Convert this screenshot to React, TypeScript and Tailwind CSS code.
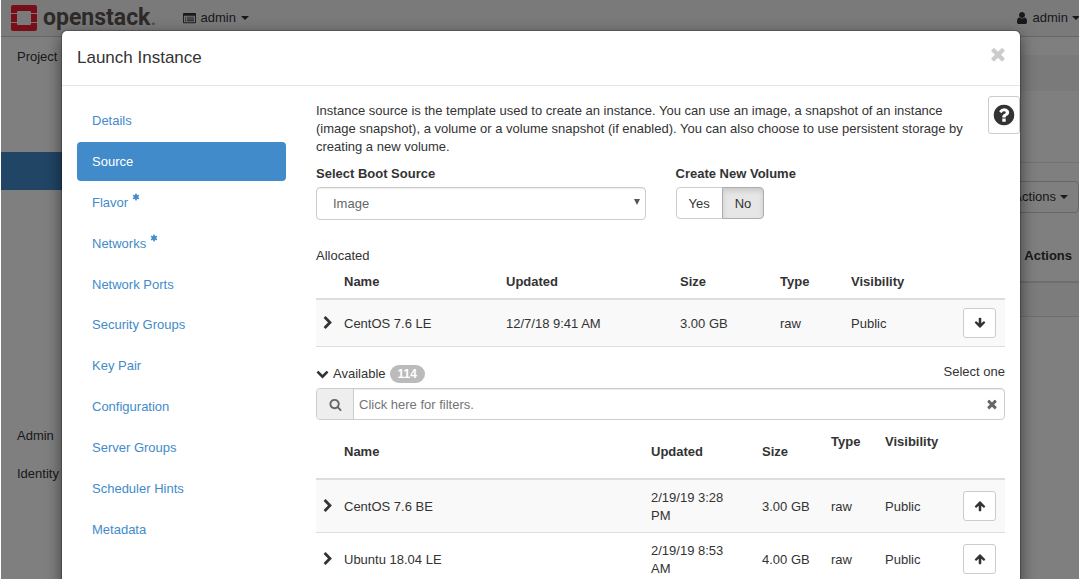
import React, { useState } from "react";

interface IImage {
    name: string;
    updated: string;
    size: string;
    type: string;
    visibility: string;
}

interface IIconProps {
    d: string;
    className?: string;
}

const icons = {
    times: "M1490 1322q0 40-28 68l-136 136q-28 28-68 28t-68-28l-294-294-294 294q-28 28-68 28t-68-28l-136-136q-28-28-28-68t28-68l294-294-294-294q-28-28-28-68t28-68l136-136q28-28 68-28t68 28l294 294 294-294q28-28 68-28t68 28l136 136q28 28 28 68t-28 68l-294 294 294 294q28 28 28 68z",
    user: "M1536 1399q0 109-62.5 187t-150.5 78h-854q-88 0-150.5-78t-62.5-187q0-85 8.5-160.5t31.5-152 58.5-131 94-89 134.5-34.5q131 128 313 128t313-128q76 0 134.5 34.5t94 89 58.5 131 31.5 152 8.5 160.5zm-256-887q0 159-112.5 271.5t-271.5 112.5-271.5-112.5-112.5-271.5 112.5-271.5 271.5-112.5 271.5 112.5 112.5 271.5z",
    question: "M1024 1376v-192q0-14-9-23t-23-9h-192q-14 0-23 9t-9 23v192q0 14 9 23t23 9h192q14 0 23-9t9-23zm256-672q0-88-55.5-163t-138.5-116-170-41q-243 0-371 213-15 24 8 42l132 100q7 6 19 6 16 0 25-12 53-68 86-92 34-24 86-24 48 0 85.5 26t37.5 59q0 38-20 61t-68 45q-63 28-115.5 86.5t-52.5 125.5v36q0 14 9 23t23 9h192q14 0 23-9t9-23q0-19 21.5-49.5t54.5-49.5q32-18 49-28.5t46-35 44.5-48 28-60.5 12.5-81zm384 192q0 209-103 385.5t-279.5 279.5-385.5 103-385.5-103-279.5-279.5-103-385.5 103-385.5 279.5-279.5 385.5-103 385.5 103 279.5 279.5 103 385.5z",
    search: "M1216 832q0-185-131.5-316.5t-316.5-131.5-316.5 131.5-131.5 316.5 131.5 316.5 316.5 131.5 316.5-131.5 131.5-316.5zm512 832q0 52-38 90t-90 38q-54 0-90-38l-343-342q-179 124-399 124-143 0-273.5-55.5t-225-150-150-225-55.5-273.5 55.5-273.5 150-225 225-150 273.5-55.5 273.5 55.5 225 150 150 225 55.5 273.5q0 220-124 399l343 343q37 37 37 90z",
    chevronRight: "M1363 877l-742 742q-19 19-45 19t-45-19l-166-166q-19-19-19-45t19-45l531-531-531-531q-19-19-19-45t19-45l166-166q19-19 45-19t45 19l742 742q19 19 19 45t-19 45z",
    chevronDown: "M1683 808l-742 741q-19 19-45 19t-45-19l-742-741q-19-19-19-45.5t19-45.5l166-165q19-19 45-19t45 19l531 531 531-531q19-19 45-19t45 19l166 165q19 19 19 45.5t-19 45.5z",
    arrowUp: "M1675 971q0 51-37 90l-75 75q-38 38-91 38-54 0-90-38l-294-293v704q0 52-37.5 84.5t-90.5 32.5h-128q-53 0-90.5-32.5t-37.5-84.5v-704l-294 293q-36 38-90 38t-90-38l-75-75q-38-38-38-90 0-53 38-91l651-651q35-37 90-37 54 0 91 37l651 651q37 39 37 91z",
    asterisk: "M1546 1050q46 26 59.5 77.5t-12.5 97.5l-64 110q-26 46-77.5 59.5t-97.5-12.5l-266-153v307q0 52-38 90t-90 38h-128q-52 0-90-38t-38-90v-307l-266 153q-46 26-97.5 12.5t-77.5-59.5l-64-110q-26-46-12.5-97.5t59.5-77.5l266-154-266-154q-46-26-59.5-77.5t12.5-97.5l64-110q26-46 77.5-59.5t97.5 12.5l266 153v-307q0-52 38-90t90-38h128q52 0 90 38t38 90v307l266-153q46-26 97.5-12.5t77.5 59.5l64 110q26 46 12.5 97.5t-59.5 77.5l-266 154z",
    list: "M128 128h1536q128 0 128 128v1152q0 128-128 128h-1536q-128 0-128-128v-1152q0-128 128-128zm0 384v896h1536v-896zm128 128h160v128h-160zm256 0h1024v128h-1024zm-256 256h160v128h-160zm256 0h1024v128h-1024zm-256 256h160v128h-160zm256 0h1024v128h-1024z",
}

const steps = [
    { label: "Details" },
    { label: "Source" },
    { label: "Flavor", required: true },
    { label: "Networks", required: true },
    { label: "Network Ports" },
    { label: "Security Groups" },
    { label: "Key Pair" },
    { label: "Configuration" },
    { label: "Server Groups" },
    { label: "Scheduler Hints" },
    { label: "Metadata" },
]

const allocated: IImage[] = [
    { name: "CentOS 7.6 LE", updated: "12/7/18 9:41 AM", size: "3.00 GB", type: "raw", visibility: "Public" },
]

const available: IImage[] = [
    { name: "CentOS 7.6 BE", updated: "2/19/19 3:28 PM", size: "3.00 GB", type: "raw", visibility: "Public" },
    { name: "Ubuntu 18.04 LE", updated: "2/19/19 8:53 AM", size: "4.00 GB", type: "raw", visibility: "Public" },
]

const Icon = ({ d, className }: IIconProps) => (
    <svg viewBox="0 0 1792 1792" fill="currentColor" fillRule="evenodd" aria-hidden="true" className={`shrink-0 ${className}`}>
        <path d={d} />
    </svg>
)

const Caret = () => (
    <svg viewBox="0 0 8 4" fill="currentColor" aria-hidden="true" className="h-1 w-2 shrink-0">
        <path d="M0 0h8l-4 4z" />
    </svg>
)

const Logo = () => (
    <a href="#" className="flex items-center gap-1.5 text-[#5a5552]">
        <svg viewBox="0 0 26 26" fill="#ee1c35" aria-hidden="true" className="h-[26px] w-[26px]">
            <path d="M2 0h22a2 2 0 0 1 2 2v6h-6v-1a1 1 0 0 0-1-1h-12a1 1 0 0 0-1 1v1h-6v-6a2 2 0 0 1 2-2z" />
            <path d="M0 9h6v8h-6zM20 9h6v8h-6z" />
            <path d="M2 26h22a2 2 0 0 0 2-2v-6h-6v1a1 1 0 0 1-1 1h-12a1 1 0 0 1-1-1v-1h-6v6a2 2 0 0 0 2 2z" />
        </svg>
        <span className="font-['Roboto',sans-serif] text-[23px] leading-6 font-bold">openstack<span className="font-normal opacity-60">.</span></span>
    </a>
)

const Background = () => (
    <div className="min-h-screen border-l border-white bg-white">
        <header className="flex h-[37px] items-center border-b border-[#ccc] bg-[#f5f5f5] pl-2.5">
            <Logo />
            <button className="ml-[26px] flex items-center gap-[5px]">
                <Icon d={icons.list} className="h-[13px] w-[13px]" />
                admin
                <Caret />
            </button>
            <button className="-mr-px ml-auto flex items-center gap-1">
                <Icon d={icons.user} className="h-[14px] w-[14px]" />
                admin
                <Caret />
            </button>
        </header>
        <div className="flex">
            <nav className="w-[220px] shrink-0 leading-9">
                <a href="#" className="block px-4 pt-0.5">Project</a>
                <div className="pt-[77px] pb-[226px]">
                    <div className="h-[38px] bg-[#428bca]" />
                </div>
                <a href="#" className="block px-4 pt-0.5">Admin</a>
                <a href="#" className="block px-4 pt-0.5">Identity</a>
            </nav>
            <main className="min-w-0 grow pt-[18px]">
                <div className="h-9 bg-[#f5f5f5]" />
                <div className="h-[72px] border-b border-[#e5e5e5]" />
                <div className="flex justify-end pt-[18px]">
                    <button className="flex h-8 items-center gap-1 rounded border border-[#ccc] px-2.5">More Actions <Caret /></button>
                </div>
                <table className="mt-[25px] w-full">
                    <thead>
                        <tr className="border-b-2 border-[#ddd]">
                            <th className="h-[44px] w-full" />
                            <th className="pr-[7px] pb-2 pl-2 font-bold">Actions</th>
                        </tr>
                    </thead>
                    <tbody>
                        <tr className="border-b border-[#ddd] bg-[#f9f9f9]">
                            <td className="h-[34px]" colSpan={2} />
                        </tr>
                    </tbody>
                </table>
            </main>
        </div>
    </div>
)

const ImageRow = ({ image, allocated }: { image: IImage; allocated?: boolean }) => (
    <tr className="border-b border-[#ddd] odd:bg-[#f9f9f9]">
        <td className="pl-[5px]">
            <button aria-label="Show details" className="block">
                <Icon d={icons.chevronRight} className="h-[14px] w-[14px]" />
            </button>
        </td>
        <td className="px-2 pt-[9px] pb-[7px]">{image.name}</td>
        <td className="pt-[9px] pr-4 pb-[7px] pl-2">{image.updated}</td>
        <td className="px-2 pt-[9px] pb-[7px]">{image.size}</td>
        <td className="px-2 pt-[9px] pb-[7px]">{image.type}</td>
        <td className="px-2 pt-[9px] pb-[7px]">{image.visibility}</td>
        <td className="p-2">
            <button aria-label={allocated ? "Remove" : "Allocate"} className="flex h-[30px] w-[33px] items-center justify-center rounded-[3px] border border-[#ccc] bg-white">
                <Icon d={icons.arrowUp} className={`h-3 w-3 ${allocated ? "rotate-180" : ""}`} />
            </button>
        </td>
    </tr>
)

const App = () => {
    const [step, setStep] = useState<string>("Source")
    const [newVolume, setNewVolume] = useState<boolean>(false)
    const [filter, setFilter] = useState<string>("")

    const handleStepClick = (label: string, e: React.MouseEvent) => {
        e.preventDefault()
        setStep(label)
    }

    return (
        <div className="relative h-screen overflow-hidden font-['Liberation_Sans',Arial,sans-serif] text-[13px] leading-[18px] text-[#333]">
            <Background />
            <div className="absolute inset-y-0 right-0 left-px bg-black/50" />
            <div className="absolute inset-0 flex items-start justify-center overflow-hidden pt-[30px] pl-[3px]">
                <div role="dialog" aria-labelledby="title" className="w-full max-w-[960px] rounded-md border border-black/20 bg-white bg-clip-padding shadow-[0_5px_15px_rgba(0,0,0,0.5)]">
                    <div className="flex items-start justify-between border-b border-[#e5e5e5] py-[15px] pr-3 pl-[15px]">
                        <h4 id="title" className="text-[17px] leading-6">Launch Instance</h4>
                        <button aria-label="Close" className="-mt-0.5 text-[#ccc]">
                            <Icon d={icons.times} className="h-5 w-5" />
                        </button>
                    </div>
                    <div className="relative grid grid-cols-[239px_1fr] pt-[15px]">
                        <button aria-label="Help" className="absolute top-2.5 right-0 flex h-[38px] w-8 items-center justify-center rounded-[3px] border border-[#ccc] bg-white">
                            <Icon d={icons.question} className="h-6 w-6" />
                        </button>
                        <ul className="mx-[15px] grid h-[447px] auto-rows-fr gap-0.5 text-[#428bca]">
                            {
                                steps.map(s => {
                                    return <li key={s.label} className="flex">
                                        <a
                                            href="#"
                                            onClick={(e) => { handleStepClick(s.label, e) }}
                                            className={`flex grow items-center gap-1 rounded px-[15px] pt-0.5 ${s.label === step ? "bg-[#428bca] text-white" : ""}`}
                                        >
                                            {s.label}
                                            {s.required && <Icon d={icons.asterisk} className="mb-3 h-2 w-2" />}
                                        </a>
                                    </li>
                                })
                            }
                        </ul>
                        <div className="min-w-0 px-[15px] pt-px">
                            <p className="mb-[9px] pr-[30px]">
                                Instance source is the template used to create an instance. You can use an image, a snapshot of an instance (image snapshot), a volume or a volume snapshot (if enabled). You can also choose to use persistent storage by creating a new volume.
                            </p>
                            <div className="grid grid-cols-2 gap-[30px]">
                                <div>
                                    <label htmlFor="boot-source" className="mb-1 block font-bold">Select Boot Source</label>
                                    <div className="relative">
                                        <select id="boot-source" className="block h-[33px] w-full appearance-none rounded border border-[#ccc] bg-white px-4 text-[#666] shadow-[inset_0_1px_1px_rgba(0,0,0,0.075)]">
                                            <option>Image</option>
                                        </select>
                                        <svg viewBox="0 0 6 6" fill="#555" aria-hidden="true" className="pointer-events-none absolute top-3 right-1.5 h-1.5 w-1.5">
                                            <path d="M0 0h6l-3 6z" />
                                        </svg>
                                    </div>
                                </div>
                                <div role="group" aria-labelledby="new-volume">
                                    <div id="new-volume" className="mb-1 font-bold">Create New Volume</div>
                                    <div className="flex">
                                        <button
                                            onClick={() => setNewVolume(true)}
                                            className={`h-8 rounded-l border px-3 pt-0.5 ${newVolume ? "border-[#adadad] bg-[#e6e6e6] shadow-[inset_0_3px_5px_rgba(0,0,0,0.125)]" : "border-[#ccc]"}`}
                                        >
                                            Yes
                                        </button>
                                        <button
                                            onClick={() => setNewVolume(false)}
                                            className={`-ml-px h-8 rounded-r border px-3 pt-0.5 ${!newVolume ? "border-[#adadad] bg-[#e6e6e6] shadow-[inset_0_3px_5px_rgba(0,0,0,0.125)]" : "border-[#ccc]"}`}
                                        >
                                            No
                                        </button>
                                    </div>
                                </div>
                            </div>

                            <div className="mt-[27px]">Allocated</div>
                            <table className="w-full table-fixed text-left">
                                <colgroup>
                                    <col className="w-5" />
                                    <col />
                                    <col className="w-[174px]" />
                                    <col className="w-[100px]" />
                                    <col className="w-[71px]" />
                                    <col className="w-[112px]" />
                                    <col className="w-[50px]" />
                                </colgroup>
                                <thead>
                                    <tr className="border-b-2 border-[#ddd]">
                                        <th />
                                        <th className="px-2 pt-2 pb-[7px]">Name</th>
                                        <th className="px-2 pt-2 pb-[7px]">Updated</th>
                                        <th className="px-2 pt-2 pb-[7px]">Size</th>
                                        <th className="px-2 pt-2 pb-[7px]">Type</th>
                                        <th className="px-2 pt-2 pb-[7px]">Visibility</th>
                                        <th />
                                    </tr>
                                </thead>
                                <tbody>
                                    {allocated.map(image => <ImageRow key={image.name} image={image} allocated />)}
                                </tbody>
                            </table>

                            <div className="mt-4 mb-[5px] flex items-start justify-between">
                                <button className="flex items-center pt-0.5">
                                    <Icon d={icons.chevronDown} className="mr-1 mb-0.5 h-[13px] w-[13px]" />
                                    Available
                                    <span className="ml-1 rounded-full bg-[#bbb] px-2 text-xs leading-[18px] font-bold text-white">114</span>
                                </button>
                                <span>Select one</span>
                            </div>
                            <div className="flex h-8 items-stretch overflow-hidden rounded border border-[#ccc] text-[#666] shadow-[inset_0_1px_1px_rgba(0,0,0,0.075)]">
                                <span className="flex w-[37px] items-center justify-center border-r border-[#ccc] bg-[#eee]">
                                    <Icon d={icons.search} className="h-[13px] w-[13px]" />
                                </span>
                                <input
                                    type="text"
                                    aria-label="Filters"
                                    placeholder="Click here for filters."
                                    value={filter}
                                    onChange={(e) => setFilter(e.target.value)}
                                    className="min-w-0 grow px-[5px] pt-0.5 placeholder:text-[#757575]"
                                />
                                <button aria-label="Clear filters" onClick={() => setFilter("")} className="px-[5px]">
                                    <Icon d={icons.times} className="h-[14px] w-[14px]" />
                                </button>
                            </div>

                            <table className="mt-[5px] w-full table-fixed text-left">
                                <colgroup>
                                    <col className="w-5" />
                                    <col />
                                    <col className="w-[111px]" />
                                    <col className="w-[69px]" />
                                    <col className="w-[54px]" />
                                    <col className="w-[78px]" />
                                    <col className="w-[50px]" />
                                </colgroup>
                                <thead>
                                    <tr className="h-[54px] border-b-2 border-[#ddd]">
                                        <th />
                                        <th className="px-2 pt-2 pb-[7px]">Name</th>
                                        <th className="px-2 pt-2 pb-[7px]">Updated</th>
                                        <th className="px-2 pt-2 pb-[7px]">Size</th>
                                        <th className="px-2 pt-2 pb-[7px] align-top">Type</th>
                                        <th className="px-2 pt-2 pb-[7px] align-top">Visibility</th>
                                        <th />
                                    </tr>
                                </thead>
                                <tbody>
                                    {available.map(image => <ImageRow key={image.name} image={image} />)}
                                </tbody>
                            </table>
                        </div>
                    </div>
                </div>
            </div>
        </div>
    )
}
export default App
